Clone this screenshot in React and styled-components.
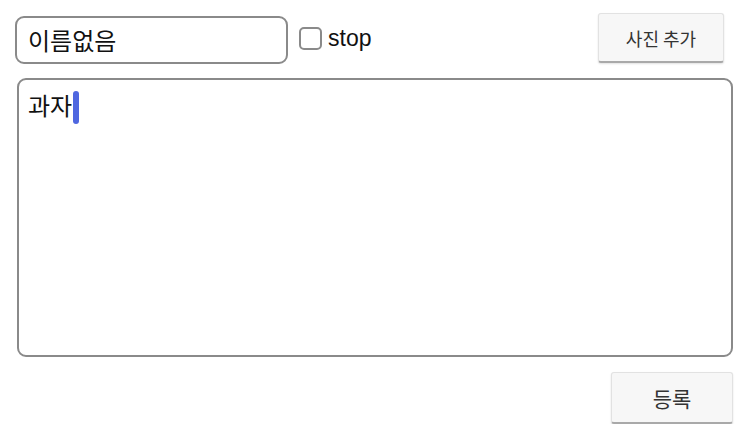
import React from 'react'
import styled, { createGlobalStyle } from 'styled-components'

const Global = createGlobalStyle`
  body {
    margin: 0;
    background: #fff;
    font-family: "Liberation Sans", "Noto Sans CJK KR", sans-serif;
  }
`

const App = () => {
  return (
    <S.Page>
      <Global />
      <S.TopRow>
        <S.NameInput defaultValue="이름없음" />
        <S.Check>
          <S.Box type="checkbox" />
          stop
        </S.Check>
        <S.Button $w={126} $h={50} $size={18}>사진 추가</S.Button>
      </S.TopRow>
      <S.Editor>
        과자<S.Caret />
      </S.Editor>
      <S.BottomRow>
        <S.Button $w={122} $h={52} $size={21}>등록</S.Button>
      </S.BottomRow>
    </S.Page>
  )
}

export default App

const S = {}

S.Page = styled.div`
  width: 750px;
  height: 424px;
  box-sizing: border-box;
  padding: 13px 17px 0 15px;
  display: flex;
  flex-direction: column;
  overflow: hidden;
`

S.TopRow = styled.div`
  display: flex;
  align-items: center;
  height: 50px;
  padding-right: 9px;
`

S.NameInput = styled.input`
  box-sizing: border-box;
  width: 273px;
  height: 48px;
  margin-top: 3px;
  border: 2px solid #8a8a8a;
  border-radius: 9px;
  padding: 0 11px;
  font-family: "Noto Sans CJK KR", "Liberation Sans", sans-serif;
  font-size: 24px;
  color: #111;
  outline: none;
`

S.Check = styled.label`
  display: flex;
  align-items: center;
  gap: 6px;
  margin-left: 11px;
  font-size: 23px;
  color: #111;
`

S.Box = styled.input`
  appearance: none;
  margin: 0;
  width: 23px;
  height: 23px;
  border: 2px solid #8a8a8a;
  border-radius: 5px;
  background: #fff;
`

S.Button = styled.button`
  box-sizing: border-box;
  margin-left: auto;
  width: ${p => p.$w}px;
  height: ${p => p.$h}px;
  border: 1px solid #e2e2e2;
  border-bottom: 2px solid #a9a9a9;
  border-radius: 3px;
  background: #f7f7f7;
  box-shadow: 0 1px 2px rgba(0, 0, 0, 0.12);
  font-family: "Noto Sans CJK KR", "Liberation Sans", sans-serif;
  font-size: ${p => p.$size}px;
  color: #333;
  padding: 0;
`

S.Editor = styled.div`
  box-sizing: border-box;
  margin: 15px 0 0 2px;
  width: 716px;
  height: 280px;
  border: 2px solid #8a8a8a;
  border-radius: 9px;
  padding: 9px 9px;
  font-family: "Noto Sans CJK KR", sans-serif;
  font-size: 24px;
  line-height: 32px;
  color: #111;
`

S.Caret = styled.span`
  display: inline-block;
  width: 6px;
  height: 33px;
  margin-left: 1px;
  vertical-align: -9px;
  border-radius: 3px;
  background: #4f67e0;
`

S.BottomRow = styled.div`
  display: flex;
  justify-content: flex-end;
  margin-top: 15px;
`
